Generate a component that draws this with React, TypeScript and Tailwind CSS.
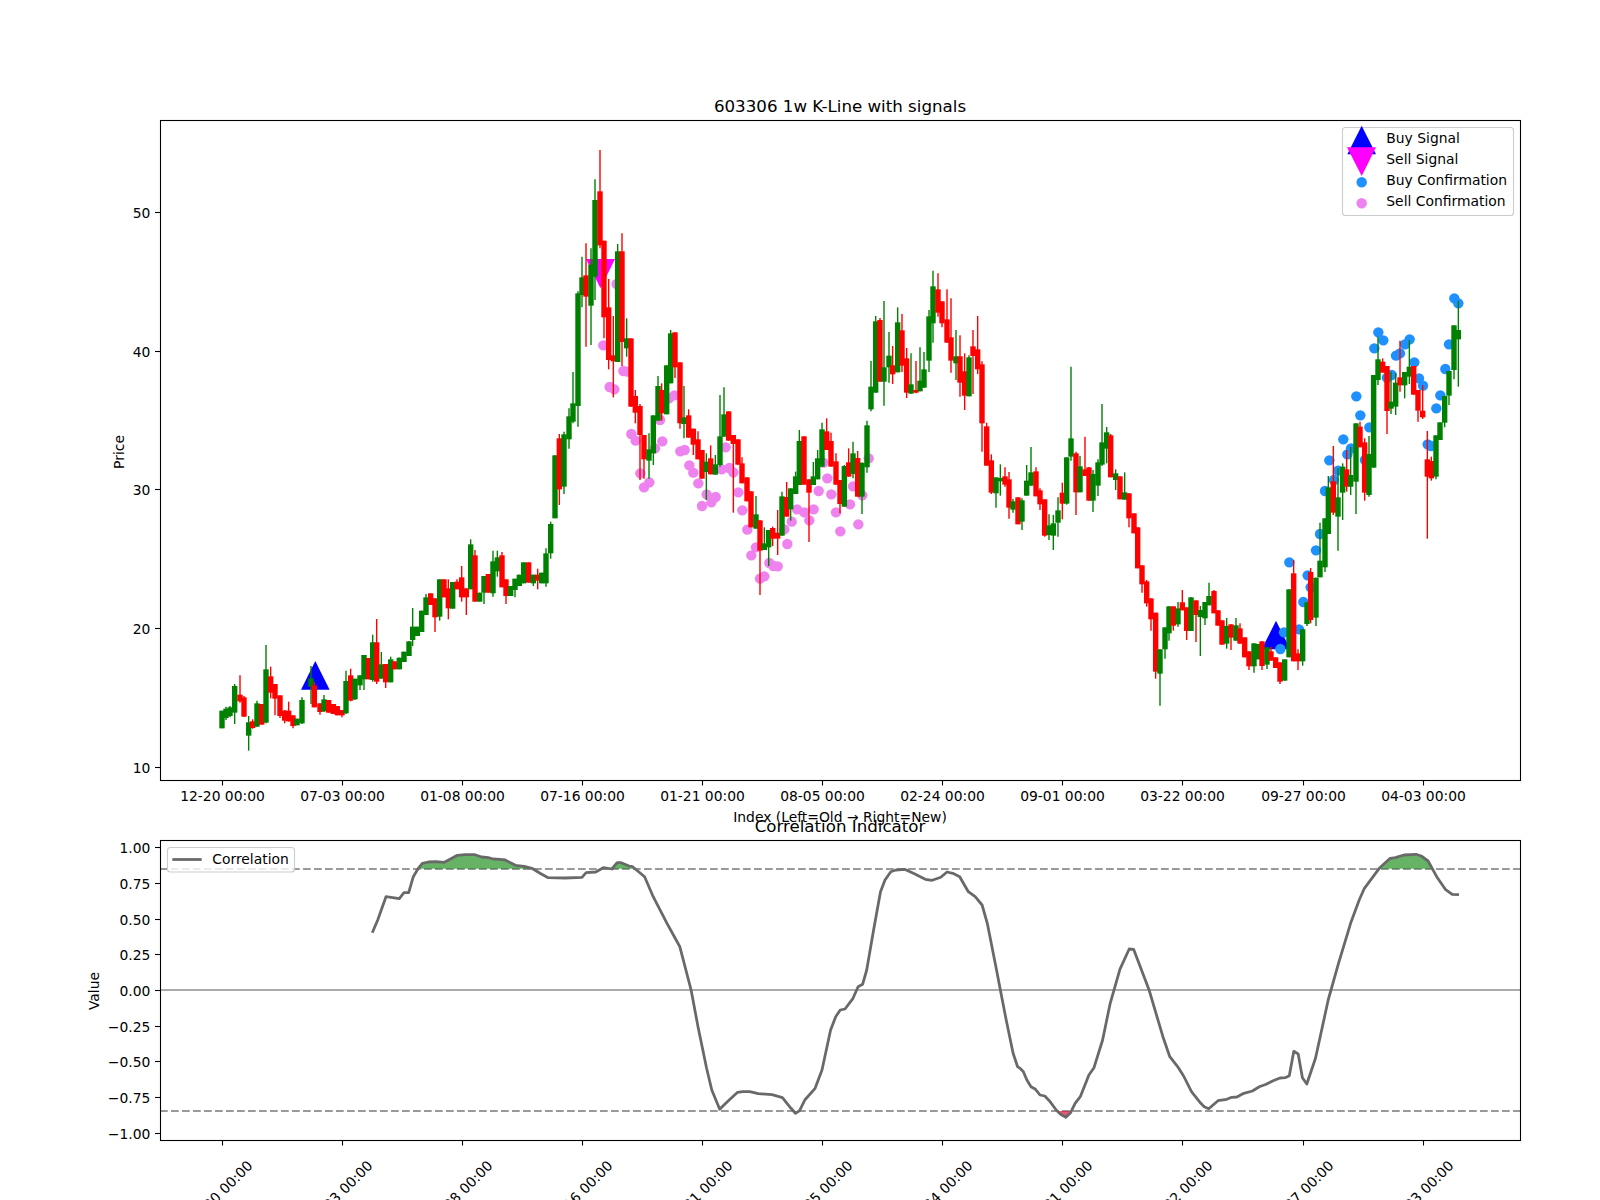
import React from "react";

type R = [string, number, number, number, number?, number?];
type C = { c: string; x: number; t: number; b: number; wt: number; wb: number };
const G = "#008000";
const D = "#ff0000";
const seg = (x0: number, y0: number, s: number, rows: R[]): C[] =>
  rows.map(([c, x, t, b, wt, wb]) => ({
    c: c === "g" ? G : D,
    x: x0 + x / s,
    t: y0 + t / s,
    b: y0 + b / s,
    wt: y0 + (wt ?? t) / s,
    wb: y0 + (wb ?? b) / s,
  }));

const candles: C[] = [
  ...seg(140, 480, 3, [
    ["g", 246, 692, 745], ["g", 258, 686, 714, 680, 720], ["g", 270, 682, 708, 678, 712], ["g", 284, 618, 698, 612, 732],
    ["r", 300, 644, 664, 586, 668], ["r", 312, 652, 710, 648, 710], ["g", 326, 727, 767, 708, 812], ["r", 338, 724, 744, 718, 746],
    ["g", 351, 670, 740, 662, 740], ["r", 365, 672, 734], ["g", 378, 568, 728, 495, 730], ["r", 392, 589, 638, 560, 655],
    ["r", 405, 612, 656, 612, 706], ["r", 420, 646, 708, 646, 714], ["r", 434, 692, 722, 690, 730], ["r", 446, 692, 724, 665, 725],
    ["r", 459, 706, 738, 706, 745], ["g", 471, 716, 736], ["g", 486, 660, 730, 652, 732], ["g", 513, 595, 620, 558, 672],
    ["r", 523, 616, 682, 606, 682], ["r", 540, 670, 696, 670, 704], ["g", 552, 658, 694, 645, 696], ["r", 566, 660, 698],
    ["r", 580, 672, 702], ["r", 592, 678, 706], ["r", 606, 690, 706, 690, 712], ["g", 618, 603, 700, 572, 702], ["r", 632, 586, 662, 566, 664],
    ["g", 645, 596, 658, 596, 660], ["g", 660, 586, 616, 586, 630], ["g", 672, 525, 598, 525, 630], ["r", 686, 534, 598],
    ["g", 698, 487, 600, 464, 605], ["r", 710, 487, 605, 417, 612], ["g", 724, 553, 596, 516, 596], ["r", 737, 552, 607, 552, 624],
    ["g", 752, 538, 607, 530, 607], ["r", 764, 544, 568], ["g", 778, 533, 568], ["g", 792, 515, 546], ["g", 807, 484, 528],
    ["g", 818, 440, 480, 384, 498], ["g", 832, 440, 468], ["g", 845, 392, 456], ["g", 858, 352, 405, 342, 405], ["r", 872, 340, 375],
    ["r", 885, 355, 412, 355, 456], ["g", 899, 298, 410, 298, 422], ["r", 912, 298, 352], ["r", 925, 325, 385, 298, 418], ["g", 938, 306, 386],
    ["r", 951, 305, 328, 298, 328], ["r", 965, 292, 352, 258, 365], ["r", 979, 325, 352, 325, 405], ["g", 992, 193, 328, 178, 328],
    ["r", 1005, 226, 365, 210, 365], ["g", 1019, 338, 365], ["g", 1032, 288, 338, 288, 372], ["r", 1045, 282, 338], ["g", 1059, 244, 340, 212, 350],
    ["g", 1072, 232, 274, 212, 290], ["r", 1086, 226, 322, 216, 322], ["r", 1098, 298, 348, 298, 372], ["g", 1112, 318, 348], ["g", 1125, 296, 330, 296, 352],
    ["g", 1138, 284, 318], ["g", 1151, 247, 310], ["r", 1166, 247, 308], ["g", 1180, 284, 310, 284, 318], ["r", 1193, 284, 302, 266, 328],
  ]),
  ...seg(520, 370, 3, [["g", 65, 608, 640], ["g", 78, 550, 640, 535, 650], ["g", 92, 462, 550, 455, 566], ["g", 105, 256, 445]]),
  ...seg(520, 130, 3, [
    ["r", 118, 925, 1078, 912, 1125], ["g", 132, 913, 1070, 905, 1092], ["g", 147, 859, 928, 835, 956], ["g", 159, 820, 875, 726, 880],
    ["g", 174, 490, 828, 484, 890], ["g", 186, 442, 495, 380, 532], ["r", 198, 436, 500, 340, 650], ["g", 213, 404, 527, 355, 645],
    ["g", 225, 210, 440, 148, 510], ["r", 240, 184, 346, 60, 355], ["r", 252, 332, 562, 332, 625], ["r", 266, 532, 690, 447, 718],
    ["r", 280, 676, 694, 558, 802], ["g", 293, 364, 696, 342, 696], ["r", 306, 364, 636, 310, 708], ["g", 320, 625, 655, 565, 680],
    ["r", 333, 625, 830], ["r", 346, 798, 848, 780, 880], ["r", 360, 828, 915, 822, 1050], ["r", 372, 915, 988, 915, 1046],
    ["g", 387, 958, 992, 910, 1046], ["g", 400, 856, 970, 856, 1005], ["g", 414, 768, 872, 738, 872], ["r", 425, 780, 850, 760, 872],
    ["g", 440, 706, 853], ["g", 452, 610, 760, 600, 760], ["r", 465, 607, 712, 607, 744], ["r", 480, 697, 880, 697, 896],
  ]),
  ...seg(520, 370, 3, [
    ["g", 492, 142, 162, 48, 205], ["r", 506, 136, 203, 118, 203], ["r", 520, 176, 224, 176, 255], ["r", 534, 208, 268, 184, 268],
    ["r", 546, 240, 326], ["g", 559, 275, 306, 250, 390], ["r", 572, 265, 313, 226, 313], ["g", 586, 283, 314, 255, 314],
    ["g", 600, 199, 285, 75, 290], ["g", 612, 133, 200, 52, 200], ["r", 626, 124, 212], ["r", 640, 195, 222, 195, 428],
    ["r", 654, 208, 284], ["r", 666, 280, 340, 262, 340], ["r", 681, 322, 394], ["r", 693, 364, 472], ["g", 708, 433, 476, 378, 476],
    ["r", 720, 451, 542, 451, 675], ["g", 733, 520, 540, 472, 540], ["g", 746, 480, 532, 480, 588], ["r", 758, 474, 506, 470, 528],
    ["r", 773, 488, 506, 420, 555], ["g", 786, 379, 497, 365, 497], ["r", 800, 381, 440, 336, 440], ["g", 812, 355, 418, 355, 452],
    ["g", 827, 319, 372, 305, 372], ["g", 838, 213, 345, 180, 345], ["r", 852, 199, 344], ["r", 867, 328, 368, 328, 516],
    ["g", 880, 319, 345, 276, 345], ["g", 893, 265, 328, 240, 328], ["g", 906, 178, 290, 158, 290], ["r", 920, 184, 240, 145, 240],
    ["r", 933, 213, 290, 188, 290], ["r", 948, 274, 344, 250, 344], ["r", 960, 330, 402, 330, 430], ["g", 973, 288, 410, 285, 410],
    ["r", 986, 277, 320, 235, 320], ["g", 999, 250, 312, 215, 325], ["r", 1013, 264, 380, 243, 380], ["g", 1026, 278, 380, 278, 432],
    ["g", 1041, 166, 292, 152, 308],
  ]),
  ...seg(860, 250, 3, [
    ["g", 33, 410, 478, 333, 484], ["g", 47, 214, 428, 198, 428], ["r", 60, 210, 395, 204, 395], ["g", 72, 352, 395, 153, 467],
    ["g", 87, 317, 352, 246, 398], ["r", 98, 346, 373, 288, 402], ["g", 113, 217, 367, 172, 367], ["r", 126, 241, 347, 192, 366],
    ["r", 140, 325, 428, 294, 444], ["g", 153, 403, 431, 310, 431], ["r", 168, 420, 428, 333, 430], ["g", 180, 392, 424, 292, 424],
    ["g", 192, 358, 413, 306, 413], ["g", 207, 199, 332, 180, 366], ["g", 219, 109, 220, 62, 278], ["r", 234, 118, 188, 70, 200],
    ["r", 246, 154, 220, 154, 232], ["r", 261, 208, 278, 118, 278], ["r", 273, 262, 332, 145, 368], ["g", 288, 319, 340, 240, 390],
    ["r", 300, 319, 398, 256, 440], ["r", 314, 364, 437, 310, 480], ["g", 327, 322, 439, 316, 439], ["r", 339, 289, 318, 240, 432],
    ["r", 353, 298, 358, 198, 372], ["r", 366, 343, 520, 334, 605], ["r", 380, 529, 647, 518, 647], ["r", 394, 631, 728, 613, 732],
    ["g", 408, 682, 730, 682, 773], ["g", 421, 684, 694, 643, 737], ["r", 435, 679, 704, 652, 710], ["r", 447, 688, 773, 666, 806],
    ["g", 459, 754, 779, 747, 788], ["r", 474, 742, 823], ["g", 486, 751, 815, 745, 840], ["g", 500, 692, 737, 645, 737],
    ["g", 513, 667, 707, 591, 707], ["r", 528, 664, 739, 652, 739], ["r", 540, 721, 763, 715, 780], ["r", 554, 748, 857, 748, 860],
    ["g", 567, 826, 855, 793, 870], ["g", 580, 820, 857, 795, 900], ["g", 594, 781, 818, 742, 860], ["r", 607, 728, 761, 698, 808],
    ["g", 620, 622, 761, 622, 764], ["g", 633, 565, 620, 350, 632], ["r", 648, 610, 727, 605, 795], ["g", 660, 649, 727, 618, 727],
    ["r", 675, 658, 678, 560, 678], ["r", 687, 652, 752], ["g", 699, 672, 752, 660, 786], ["g", 714, 637, 707, 628, 738],
    ["g", 726, 577, 644, 462, 648], ["g", 740, 547, 596, 531, 640], ["r", 752, 556, 682, 552, 682], ["g", 767, 670, 690, 658, 720],
    ["r", 780, 679, 748], ["g", 794, 727, 749, 667, 749], ["r", 807, 730, 805, 730, 832], ["r", 822, 790, 850],
  ]),
  ...seg(1120, 530, 3, [
    ["r", 53, -8, 115], ["r", 66, 106, 163, 106, 188], ["r", 80, 154, 220, 150, 230], ["r", 93, 205, 268, 205, 302], ["r", 107, 248, 425, 248, 446],
    ["g", 120, 358, 431, 358, 527], ["g", 135, 292, 358, 292, 386], ["g", 147, 229, 310, 229, 332], ["r", 160, 229, 287, 229, 302],
    ["g", 174, 235, 283, 216, 290], ["r", 187, 217, 241, 180, 241], ["r", 200, 232, 303, 232, 330], ["g", 213, 202, 303], ["r", 228, 211, 255, 211, 336],
    ["g", 241, 240, 261, 228, 378], ["g", 255, 216, 265, 216, 285], ["g", 267, 198, 226, 158, 226], ["r", 282, 183, 250, 180, 250], ["r", 294, 241, 287],
    ["r", 306, 271, 344], ["g", 320, 288, 341, 264, 356], ["r", 333, 283, 323, 283, 360], ["g", 348, 286, 332, 264, 332], ["r", 360, 295, 341, 280, 341],
    ["r", 374, 322, 382], ["r", 387, 364, 409, 364, 420], ["g", 402, 340, 409, 340, 428], ["g", 415, 342, 388], ["r", 426, 334, 408, 334, 420],
    ["g", 441, 352, 404, 352, 417], ["r", 453, 364, 392, 350, 392], ["r", 467, 382, 414], ["r", 480, 397, 455, 397, 462], ["g", 494, 388, 452],
    ["g", 507, 178, 382], ["r", 521, 130, 394, 90, 394], ["r", 534, 370, 394, 358, 420], ["g", 548, 298, 394, 298, 407], ["g", 561, 217, 282, 217, 288],
    ["r", 572, 126, 270, 114, 280], ["g", 588, 143, 263, 143, 288], ["g", 600, 92, 142, -22, 142],
  ]),
  ...seg(1240, 110, 3, [
    ["g", 255, 1225, 1372, 1225, 1386], ["g", 265, 1132, 1272, 1098, 1272], ["r", 280, 1114, 1208, 1008, 1215], ["g", 294, 1162, 1220, 1075, 1322],
    ["g", 308, 1070, 1148, 1060, 1230], ["r", 320, 1078, 1130, 1020, 1145], ["g", 332, 1095, 1130, 1010, 1155], ["g", 348, 940, 1115, 940, 1212],
    ["r", 360, 950, 1012, 935, 1012], ["r", 374, 997, 1148, 985, 1172], ["g", 387, 1032, 1155, 978, 1160], ["g", 401, 795, 1073],
    ["g", 414, 748, 810, 680, 825], ["r", 428, 755, 788, 745, 788], ["r", 441, 768, 903, 768, 972], ["g", 453, 875, 896, 785, 912],
    ["g", 467, 818, 890, 790, 915], ["r", 480, 802, 826, 692, 845], ["g", 494, 786, 826, 786, 865], ["g", 508, 770, 800, 690, 822],
    ["r", 521, 768, 854], ["r", 534, 840, 902, 840, 935], ["r", 548, 902, 922, 825, 927], ["r", 562, 1048, 1100, 963, 1286],
    ["r", 574, 1053, 1105, 1040, 1112], ["g", 588, 976, 1100, 976, 1108], ["g", 600, 937, 990], ["g", 614, 858, 938, 858, 952],
    ["g", 627, 783, 857, 783, 885], ["g", 642, 646, 780, 646, 808], ["g", 655, 660, 688, 572, 830],
  ]),
];

const pts = (x0: number, y0: number, sx: number, a: number[][], sy = 3) => a.map(([x, y]) => [x0 + x / sx, y0 + y / sy]);

const pink = [
  ...pts(520, 370, 3, [[269, 51], [283, 58], [310, 3], [322, 5], [463, 76], [447, 85], [334, 192], [347, 212], [405, 235], [427, 214], [481, 244], [494, 240], [420, 150], [361, 310], [388, 337], [372, 352], [508, 286], [520, 308], [535, 340], [560, 373], [587, 381], [574, 397], [546, 408], [605, 298], [628, 294], [640, 307], [617, 232], [655, 367], [667, 421], [682, 479], [708, 532], [694, 556], [748, 579], [760, 588], [773, 589], [733, 619], [720, 626], [802, 522], [815, 455], [831, 418], [853, 427], [881, 418], [868, 451], [896, 363], [922, 325], [934, 373], [948, 427], [910, 278], [961, 484], [990, 403], [999, 349], [1015, 463], [1027, 376], [1046, 265], [793, 478]]),
  ...pts(520, 130, 3, [[250, 646], [290, 462]]),
];
const blue = [
  ...pts(1240, 110, 3, [[643, 565], [655, 580], [415, 667], [430, 691], [403, 715], [509, 688], [495, 703], [468, 737], [480, 730], [627, 703], [523, 757], [616, 777], [441, 803], [455, 795], [537, 805], [549, 827], [349, 859], [601, 856], [589, 895], [361, 916], [388, 952], [310, 988], [563, 1003], [573, 1008], [333, 1015], [322, 1033], [268, 1051], [375, 1050], [294, 1082], [282, 1110], [255, 1143]]),
  ...pts(1120, 530, 3, [[508, 97], [600, 12], [588, 61], [563, 136], [572, 172], [550, 216], [481, 357], [492, 307], [537, 298]]),
];

const line = [
  ...pts(0, 770, 3, [[1117, 488], [1133, 450], [1158, 380], [1198, 386], [1212, 368], [1226, 368], [1240, 320], [1255, 295], [1267, 280], [1285, 276], [1308, 275], [1333, 277], [1350, 268], [1372, 256], [1395, 254], [1425, 254], [1445, 261], [1465, 263], [1480, 267], [1500, 268]]),
  ...pts(500, 770, 2.904, [[0, 268], [15, 270], [45, 286], [70, 289], [95, 296], [120, 312], [140, 323], [190, 324], [238, 322], [250, 308], [278, 306], [300, 293], [325, 297], [340, 278], [352, 278], [375, 288], [385, 290], [420, 320], [445, 380], [485, 460], [510, 507], [522, 530], [555, 660], [575, 770], [600, 895], [615, 960], [638, 1018], [660, 995], [690, 967], [705, 965], [725, 965], [750, 971], [790, 974], [820, 983], [845, 1015], [858, 1030], [870, 1022], [885, 990], [915, 955], [935, 900], [960, 780], [975, 740], [988, 720], [1002, 717], [1025, 685], [1040, 650], [1053, 643], [1065, 600], [1085, 480], [1105, 365], [1118, 330], [1135, 305], [1150, 300], [1175, 298], [1205, 312], [1235, 328], [1255, 331], [1280, 322], [1298, 306], [1315, 310], [1335, 320], [1360, 365], [1380, 380], [1400, 405], [1415, 460], [1440, 590], [1455, 670], [1470, 750], [1490, 850], [1503, 890]]),
  ...pts(1020, 770, 2.904, [[0, 895], [10, 905], [20, 930], [32, 950], [45, 958], [58, 975], [72, 978], [85, 992], [105, 1020], [118, 1033], [133, 1042], [147, 1028], [160, 1000], [175, 980], [200, 915], [215, 893], [240, 810], [262, 700], [290, 598], [317, 537], [330, 538], [375, 660], [415, 800], [435, 860], [460, 893], [475, 918], [498, 965], [525, 1000], [535, 1010], [548, 1016], [575, 992], [600, 988], [615, 982], [630, 981], [650, 970], [675, 963], [695, 950], [715, 943], [735, 932], [755, 924], [770, 923], [782, 917], [795, 844], [808, 852], [820, 923], [833, 942], [858, 865], [895, 690], [925, 580], [960, 460], [985, 390], [1000, 355], [1045, 293], [1075, 265], [1090, 263], [1115, 255], [1150, 253], [1165, 258], [1185, 273], [1210, 320], [1235, 358], [1255, 373], [1275, 374]]),
];
const lineStr = line.map(([x, y]) => `${x.toFixed(1)},${y.toFixed(1)}`).join(" ");
const firstX = line[0][0].toFixed(1);
const lastX = line[line.length - 1][0].toFixed(1);

const labels = ["12-20 00:00", "07-03 00:00", "01-08 00:00", "07-16 00:00", "01-21 00:00", "08-05 00:00", "02-24 00:00", "09-01 00:00", "03-22 00:00", "09-27 00:00", "04-03 00:00"];
const ticks = [222.5, 342.5, 462.5, 582.5, 702.5, 822.5, 942.5, 1062.5, 1182.5, 1303.5, 1423.5];
const priceTicks = [50, 40, 30, 20, 10];
const priceY = (p: number) => Math.floor(767.3 - (p - 10) * 13.867) + 0.5;
const valueTicks = ["1.00", "0.75", "0.50", "0.25", "0.00", "−0.25", "−0.50", "−0.75", "−1.00"];
const valueY = (i: number) => Math.round(990 - (1 - i * 0.25) * 142.8) + 0.5;

function TopPanel() {
  return (
    <g>
      <polygon points="315.3,661 301,689.7 329.6,689.7" fill="#0000ff" />
      <polygon points="1276,620.7 1261.7,649.3 1290.3,649.3" fill="#0000ff" />
      <polygon points="586,259 615,259 600.5,288.3" fill="#ff00ff" />
      {pink.map(([x, y], i) => <circle key={i} cx={x} cy={y} r={5.2} fill="#ee82ee" />)}
      {blue.map(([x, y], i) => <circle key={i} cx={x} cy={y} r={5.2} fill="#1e90ff" />)}
      {candles.map((k, i) => (
        <g key={i} fill={k.c} stroke={k.c}>
          <line x1={k.x} x2={k.x} y1={k.wt} y2={k.wb} strokeWidth={1.4} />
          <rect x={k.x - 2.7} y={k.t} width={5.4} height={Math.max(k.b - k.t, 1)} stroke="none" />
        </g>
      ))}
      <rect x={160.5} y={120.5} width={1360} height={660} fill="none" stroke="#000" strokeWidth={1.1} />
      {priceTicks.map((p) => (
        <g key={p}>
          <line x1={155} x2={160} y1={priceY(p)} y2={priceY(p)} stroke="#000" strokeWidth={1.1} />
          <text x={150.3} y={priceY(p) + 5} textAnchor="end" className="text-[13.89px]">{p}</text>
        </g>
      ))}
      {ticks.map((x, i) => (
        <g key={x}>
          <line x1={x} x2={x} y1={780} y2={785.5} stroke="#000" strokeWidth={1.1} />
          <text x={x} y={801} textAnchor="middle" className="text-[13.89px]">{labels[i]}</text>
        </g>
      ))}
      <text x={840} y={111.7} textAnchor="middle" className="text-[16.67px]">603306 1w K-Line with signals</text>
      <text x={840} y={821.5} textAnchor="middle" className="text-[13.89px]">Index (Left=Old → Right=New)</text>
      <text transform="translate(124 452) rotate(-90)" textAnchor="middle" className="text-[13.89px]">Price</text>
      <rect x={1342.5} y={127.5} width={171} height={88} rx={3} fill="#ffffff" fillOpacity={0.8} stroke="#cccccc" strokeWidth={1.1} />
      <polygon points="1361.7,125.7 1347.3,154.3 1376,154.3" fill="#0000ff" />
      <polygon points="1347,147.3 1376,147.3 1361.7,176" fill="#ff00ff" />
      <circle cx={1361.7} cy={182.3} r={5.2} fill="#1e90ff" />
      <circle cx={1361.7} cy={203.3} r={5.2} fill="#ee82ee" />
      {["Buy Signal", "Sell Signal", "Buy Confirmation", "Sell Confirmation"].map((t, i) => (
        <text key={t} x={1386.3} y={143.3 + i * 21} className="text-[13.89px]">{t}</text>
      ))}
    </g>
  );
}

function BottomPanel() {
  return (
    <g>
      <defs>
        <clipPath id="above"><rect x={160} y={840} width={1360} height={28.8} /></clipPath>
        <clipPath id="below"><rect x={160} y={1111} width={1360} height={29} /></clipPath>
      </defs>
      <line x1={160} x2={1520} y1={990} y2={990} stroke="#ababab" strokeWidth={2} />
      <line x1={160} x2={1520} y1={869} y2={869} stroke="#999999" strokeWidth={2.08} strokeDasharray="7.7 3.3" />
      <line x1={160} x2={1520} y1={1111} y2={1111} stroke="#999999" strokeWidth={2.08} strokeDasharray="7.7 3.3" />
      <polygon points={`${lineStr} ${lastX},869 ${firstX},869`} fill="#008000" fillOpacity={0.6} clipPath="url(#above)" />
      <polygon points={`${lineStr} ${lastX},1111 ${firstX},1111`} fill="#dc143c" fillOpacity={0.7} clipPath="url(#below)" />
      <polyline points={lineStr} fill="none" stroke="#696969" strokeWidth={2.78} strokeLinejoin="round" />
      <rect x={160.5} y={840.5} width={1360} height={300} fill="none" stroke="#000" strokeWidth={1.1} />
      {valueTicks.map((t, i) => (
        <g key={t}>
          <line x1={155} x2={160} y1={valueY(i)} y2={valueY(i)} stroke="#000" strokeWidth={1.1} />
          <text x={150.3} y={valueY(i) + 5} textAnchor="end" className="text-[13.89px]">{t}</text>
        </g>
      ))}
      {ticks.map((x, i) => (
        <g key={x}>
          <line x1={x} x2={x} y1={1140} y2={1145.5} stroke="#000" strokeWidth={1.1} />
          <text transform={`rotate(-45 ${x - 2.5} 1193)`} x={x - 2.5} y={1198} textAnchor="middle" className="text-[13.89px]">{labels[i]}</text>
        </g>
      ))}
      <text x={840} y={831.7} textAnchor="middle" className="text-[16.67px]">Correlation Indicator</text>
      <text transform="translate(98.5 991) rotate(-90)" textAnchor="middle" className="text-[13.89px]">Value</text>
      <rect x={167.5} y={847.5} width={127} height={24.5} rx={3} fill="#ffffff" fillOpacity={0.8} stroke="#cccccc" strokeWidth={1.1} />
      <line x1={172.3} x2={201.7} y1={859.5} y2={859.5} stroke="#696969" strokeWidth={2.78} />
      <text x={212.3} y={864.3} className="text-[13.89px]">Correlation</text>
    </g>
  );
}

export default function App() {
  return (
    <div className="w-[1600px] h-[1200px] bg-white overflow-hidden font-['DejaVu_Sans',sans-serif] text-black">
      <svg width={1600} height={1200} viewBox="0 0 1600 1200" className="block fill-black">
        <TopPanel />
        <BottomPanel />
      </svg>
    </div>
  );
}
